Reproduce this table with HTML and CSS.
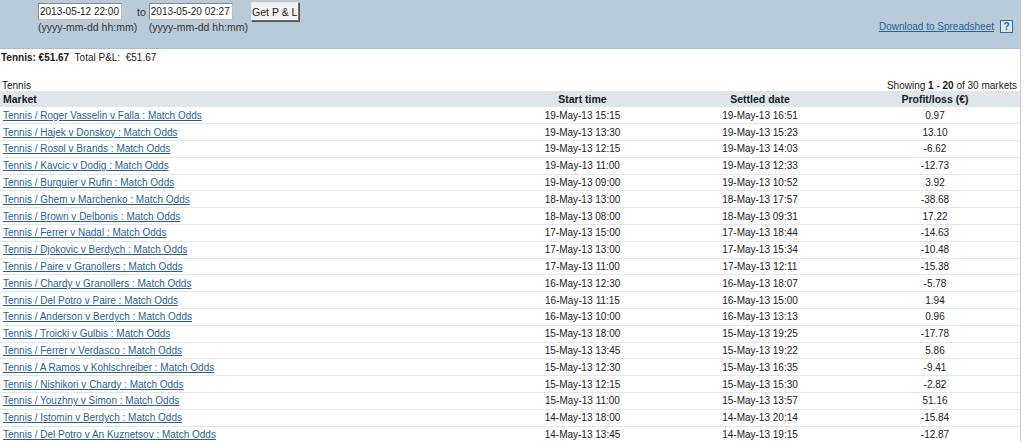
FILE: index.html
```html
<!DOCTYPE html>
<html lang="en">
  <head>
    <meta charset="utf-8" />
    <title>Betting P&amp;L</title>
    <link rel="stylesheet" href="styles.css">
  </head>
  <body>
    <div class="page">
      <!-- Date filter -->
      <div class="filter">
        <form class="range">
          <div class="field">
            <input type="text" class="date-input" value="2013-05-12 22:00" />
            <span class="hint">(yyyy-mm-dd hh:mm)</span>
          </div>
          <span class="to">to</span>
          <div class="field">
            <input type="text" class="date-input" value="2013-05-20 02:27" />
            <span class="hint">(yyyy-mm-dd hh:mm)</span>
          </div>
          <button type="button" class="get-btn">Get P &amp; L</button>
        </form>
        <div class="download">
          <a href="#">Download to Spreadsheet</a>
          <span class="help">?</span>
        </div>
      </div>

      <div class="summary"><b>Tennis: &euro;51.67</b>&nbsp; Total P&amp;L:&nbsp; &euro;51.67</div>

      <div class="caption">
        <span>Tennis</span>
        <span>Showing <b>1 - 20</b> of 30 markets</span>
      </div>

      <table class="markets">
        <thead>
          <tr>
            <th class="col-market">Market</th>
            <th class="col-start">Start time</th>
            <th class="col-settled">Settled date</th>
            <th class="col-pl">Profit/loss (&euro;)</th>
          </tr>
        </thead>
        <tbody>
          <tr><td class="col-market"><a href="#">Tennis / Roger Vasselin v Falla : Match Odds</a></td><td>19-May-13 15:15</td><td>19-May-13 16:51</td><td>0.97</td></tr>
          <tr><td class="col-market"><a href="#">Tennis / Hajek v Donskoy : Match Odds</a></td><td>19-May-13 13:30</td><td>19-May-13 15:23</td><td>13.10</td></tr>
          <tr><td class="col-market"><a href="#">Tennis / Rosol v Brands : Match Odds</a></td><td>19-May-13 12:15</td><td>19-May-13 14:03</td><td>-6.62</td></tr>
          <tr><td class="col-market"><a href="#">Tennis / Kavcic v Dodig : Match Odds</a></td><td>19-May-13 11:00</td><td>19-May-13 12:33</td><td>-12.73</td></tr>
          <tr><td class="col-market"><a href="#">Tennis / Burquier v Rufin : Match Odds</a></td><td>19-May-13 09:00</td><td>19-May-13 10:52</td><td>3.92</td></tr>
          <tr><td class="col-market"><a href="#">Tennis / Ghem v Marchenko : Match Odds</a></td><td>18-May-13 13:00</td><td>18-May-13 17:57</td><td>-38.68</td></tr>
          <tr><td class="col-market"><a href="#">Tennis / Brown v Delbonis : Match Odds</a></td><td>18-May-13 08:00</td><td>18-May-13 09:31</td><td>17.22</td></tr>
          <tr><td class="col-market"><a href="#">Tennis / Ferrer v Nadal : Match Odds</a></td><td>17-May-13 15:00</td><td>17-May-13 18:44</td><td>-14.63</td></tr>
          <tr><td class="col-market"><a href="#">Tennis / Djokovic v Berdych : Match Odds</a></td><td>17-May-13 13:00</td><td>17-May-13 15:34</td><td>-10.48</td></tr>
          <tr><td class="col-market"><a href="#">Tennis / Paire v Granollers : Match Odds</a></td><td>17-May-13 11:00</td><td>17-May-13 12:11</td><td>-15.38</td></tr>
          <tr><td class="col-market"><a href="#">Tennis / Chardy v Granollers : Match Odds</a></td><td>16-May-13 12:30</td><td>16-May-13 18:07</td><td>-5.78</td></tr>
          <tr><td class="col-market"><a href="#">Tennis / Del Potro v Paire : Match Odds</a></td><td>16-May-13 11:15</td><td>16-May-13 15:00</td><td>1.94</td></tr>
          <tr><td class="col-market"><a href="#">Tennis / Anderson v Berdych : Match Odds</a></td><td>16-May-13 10:00</td><td>16-May-13 13:13</td><td>0.96</td></tr>
          <tr><td class="col-market"><a href="#">Tennis / Troicki v Gulbis : Match Odds</a></td><td>15-May-13 18:00</td><td>15-May-13 19:25</td><td>-17.78</td></tr>
          <tr><td class="col-market"><a href="#">Tennis / Ferrer v Verdasco : Match Odds</a></td><td>15-May-13 13:45</td><td>15-May-13 19:22</td><td>5.86</td></tr>
          <tr><td class="col-market"><a href="#">Tennis / A Ramos v Kohlschreiber : Match Odds</a></td><td>15-May-13 12:30</td><td>15-May-13 16:35</td><td>-9.41</td></tr>
          <tr><td class="col-market"><a href="#">Tennis / Nishikori v Chardy : Match Odds</a></td><td>15-May-13 12:15</td><td>15-May-13 15:30</td><td>-2.82</td></tr>
          <tr><td class="col-market"><a href="#">Tennis / Youzhny v Simon : Match Odds</a></td><td>15-May-13 11:00</td><td>15-May-13 13:57</td><td>51.16</td></tr>
          <tr><td class="col-market"><a href="#">Tennis / Istomin v Berdych : Match Odds</a></td><td>14-May-13 18:00</td><td>14-May-13 20:14</td><td>-15.84</td></tr>
          <tr><td class="col-market"><a href="#">Tennis / Del Potro v An Kuznetsov : Match Odds</a></td><td>14-May-13 13:45</td><td>14-May-13 19:15</td><td>-12.87</td></tr>
        </tbody>
      </table>
    </div>
  </body>
</html>
```

FILE: styles.css
```css
* {
  margin: 0;
  padding: 0;
  box-sizing: border-box;
}

body {
  font-family: 'Liberation Sans', Arial, sans-serif;
  font-size: 10px;
  color: #1a1a1a;
  background: #fff;
}

.page {
  width: 1021px;
  min-height: 442px;
  border-right: 1px solid #c8c8c8;
}

/* Date filter band */
.filter {
  height: 49px;
  background: #b9cbd9;
  border-bottom: 1px solid #a9bccb;
  display: flex;
  justify-content: space-between;
  padding: 3px 7px 0 38px;
}

.range {
  display: flex;
  align-items: flex-start;
}

.field {
  width: 84px;
  display: flex;
  flex-direction: column;
}

.date-input {
  width: 84px;
  height: 17px;
  border: 1px solid #b5c2cc;
  border-top-color: #7d8c98;
  border-left-color: #7d8c98;
  background: #fff;
  font-family: inherit;
  font-size: 10px;
  color: #222;
  padding: 0 1px;
}

.hint {
  color: #333;
  font-size: 10.5px;
  padding-top: 1px;
  white-space: nowrap;
}

.to {
  margin: 3px 3px 0 15px;
  color: #333;
  font-size: 10.5px;
}

.get-btn {
  margin-left: 18px;
  margin-top: -1px;
  width: 48px;
  height: 19px;
  white-space: nowrap;
  padding: 0;
  font-family: inherit;
  font-size: 10.5px;
  color: #222;
  background: #f2f2f2;
  border: 1px solid #6c6c6c;
  border-top-color: #e8e8e8;
  border-left-color: #e8e8e8;
  box-shadow: 1px 1px 0 #555;
}

.download {
  display: flex;
  align-items: center;
  gap: 6px;
  padding-top: 17px;
  align-self: flex-start;
}

.download a {
  color: #2b5f93;
  font-size: 10px;
}

.help {
  display: inline-block;
  width: 13px;
  height: 13px;
  border: 1px solid #3a6a98;
  background: #dfe8f0;
  color: #2b5f93;
  font-weight: bold;
  font-size: 10px;
  line-height: 11px;
  text-align: center;
}

.summary {
  padding: 3px 0 0 1px;
  height: 29px;
}

.caption {
  display: flex;
  justify-content: space-between;
  padding: 2px 3px 0 2px;
  height: 13px;
}

/* Markets table */
.markets {
  width: 100%;
  border-collapse: collapse;
  table-layout: fixed;
}

.markets th {
  background: #dde6ed;
  font-weight: bold;
  height: 16px;
  line-height: 14px;
  font-size: 10.5px;
  color: #1a1a1a;
  padding: 0;
}

.markets td {
  height: 16.8px;
  line-height: 15px;
  text-align: center;
  border-bottom: 1px solid #e6e6e6;
  padding: 0;
  color: #222;
}

.markets .col-market {
  text-align: left;
  padding-left: 3px;
  width: 495px;
}

.col-start {
  width: 175px;
}

.col-settled {
  width: 180px;
}

.markets td a {
  color: #2b5f93;
}
```
